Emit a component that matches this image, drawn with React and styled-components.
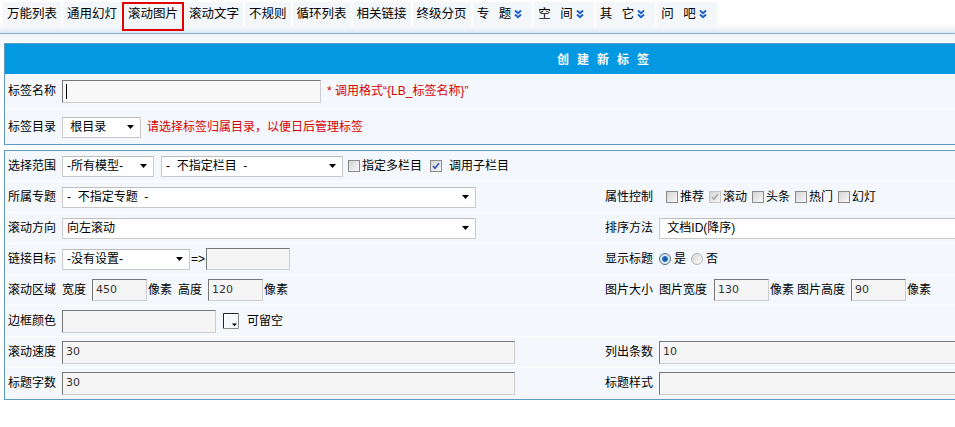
import React from 'react';
import styled, { createGlobalStyle } from 'styled-components';

const GlobalStyle = createGlobalStyle`
  html, body {
    margin: 0;
    padding: 0;
    overflow: hidden;
    background: #fff;
  }
  body {
    font-family: "Liberation Sans", "Noto Sans CJK SC", sans-serif;
    font-size: 12px;
    line-height: 1.2;
    color: #000;
  }
`;

const Page = styled.div`
  width: 955px;
  height: 427px;
  overflow: hidden;
`;

// top tab strip
const TabBar = styled.div`
  display: flex;
  align-items: flex-start;
  gap: 2px;
  height: 34px;
  padding: 2px 0 0 3px;
  box-sizing: border-box;
  background: linear-gradient(to bottom, #fff 0, #fff 24px, #dce8f3 34px);
  border-bottom: 1px solid #8eb0c6;
`;

const Tab = styled.div`
  display: flex;
  align-items: center;
  height: 24px;
  padding: 0 4px;
  box-sizing: border-box;
  background: #f3f7fa;
  font-size: 12.5px;
  white-space: nowrap;

  ${p => p.$active && `
    height: 29px;
    margin: 0 -1px;
    padding: 0 4px 5px;
    border: 2px solid #e20000;
    background: linear-gradient(to bottom, #f3f7fa 0, #f3f7fa 20px, #eaf1f7 25px);
  `}
`;

const Spaced = styled.span`
  letter-spacing: 9.5px;
  margin-right: -6.5px;
`;

const TabEnd = styled.span`
  width: 6px;
`;

const Chevron = () => (
  <svg width="8" height="10" viewBox="0 0 8 10">
    <path d="M1 1.5 L4 4.2 L7 1.5 M1 5.5 L4 8.2 L7 5.5" fill="none" stroke="#1d5fc4" strokeWidth="2" />
  </svg>
);

const Main = styled.div`
  padding: 9px 0 0 4px;
  background: linear-gradient(to bottom, #eef4f9 0, #fff 14px);
`;

const Panel = styled.div`
  width: 1198px;
  box-sizing: border-box;
  border: 1px solid #5e9bbf;
  background: #f4f8fc;

  & + & {
    margin-top: 5px;
  }
`;

const PanelHeader = styled.div`
  display: flex;
  align-items: center;
  justify-content: center;
  height: 30px;
  padding-left: 8px;
  background: #0398e2;
  color: #fff;
  font-family: "Noto Sans CJK SC", sans-serif;
  font-weight: bold;
  letter-spacing: 8px;
`;

const FormRow = styled.div`
  display: flex;
  align-items: center;
  height: ${p => p.$h}px;
  padding-left: 3px;
  box-sizing: border-box;
  border-bottom: ${p => (p.$last ? 'none' : '1px solid #fff')};
`;

const GridRow = styled.div`
  display: grid;
  grid-template-columns: 57px 540px 57px 1fr;
  align-items: center;
  height: 31px;
  box-sizing: border-box;
  border-bottom: ${p => (p.$last ? 'none' : '1px solid #fff')};
`;

const Label = styled.span`
  width: ${p => p.$w || 54}px;
  padding-left: ${p => p.$pl || 0}px;
  flex-shrink: 0;
  white-space: nowrap;
`;

const Cell = styled.div`
  display: flex;
  align-items: center;
  white-space: nowrap;
`;

const Text = styled.span`
  margin-left: ${p => p.$ml || 0}px;
  color: ${p => (p.$red ? '#d40000' : 'inherit')};
`;

const SelectBox = styled.div`
  display: inline-flex;
  align-items: center;
  justify-content: space-between;
  width: ${p => p.$w}px;
  height: 21px;
  padding: 0 6px 0 4px;
  margin-left: ${p => p.$ml || 0}px;
  box-sizing: border-box;
  border: 1px solid #c9c9c9;
  border-top-color: #bdbdbd;
  background: #fff;
  flex-shrink: 0;
  white-space: pre;
`;

const Select = ({ w, ml, children }) => (
  <SelectBox $w={w} $ml={ml}>
    <span>{children}</span>
    <svg width="7" height="4" viewBox="0 0 7 4">
      <path d="M0 0H7L3.5 4Z" fill="#000" />
    </svg>
  </SelectBox>
);

const Input = styled.div`
  display: flex;
  align-items: flex-start;
  width: ${p => p.$w}px;
  height: ${p => p.$h || 23}px;
  padding: 3px 3px 0;
  margin-left: ${p => p.$ml || 0}px;
  box-sizing: border-box;
  border: 1px solid;
  border-color: #777 #cdcdcd #cdcdcd #777;
  background: ${p => (p.$plain ? '#f8f8f8' : '#f5f5f5')};
  font-family: "DejaVu Sans", sans-serif;
  font-size: 11px;
  color: #333;
  flex-shrink: 0;
`;

const Caret = styled.span`
  width: 1px;
  height: 15px;
  background: #000;
`;

const CheckBox = styled.span`
  display: inline-flex;
  align-items: center;
  justify-content: center;
  width: 12px;
  height: 12px;
  margin-left: ${p => p.$ml || 0}px;
  margin-right: 2px;
  box-sizing: border-box;
  border: 1px solid ${p => (p.$disabled ? '#c4c4c4' : '#8a8a8a')};
  background: linear-gradient(135deg, #d4d4d4, #f9f9f9);
  flex-shrink: 0;
`;

const Check = ({ checked, disabled, ml }) => (
  <CheckBox $disabled={disabled} $ml={ml}>
    {checked && (
      <svg width="8" height="8" viewBox="0 0 8 8">
        <path d="M1 4 L3 6.2 L7 1.2" fill="none" stroke={disabled ? '#a9a9a9' : '#3552b8'} strokeWidth="1.6" />
      </svg>
    )}
  </CheckBox>
);

const Radio = styled.span`
  width: 12px;
  height: 12px;
  margin-left: ${p => p.$ml || 0}px;
  margin-right: 3px;
  box-sizing: border-box;
  border-radius: 50%;
  border: 1px solid ${p => (p.$on ? '#55708c' : '#b4b4b4')};
  background: ${p =>
    p.$on
      ? 'radial-gradient(circle, #0c4a90 0, #2a78c6 2.6px, #e4ebf3 3.4px, #c9d4e0 100%)'
      : 'linear-gradient(135deg, #d6d6d6, #fbfbfb)'};
  flex-shrink: 0;
`;

const ColorIcon = () => (
  <svg width="17" height="16" viewBox="0 0 17 16" style={{ marginLeft: 7, marginRight: 7 }}>
    <path d="M0.5 15.5 V0.5 H15.5" fill="none" stroke="#222" />
    <path d="M15.5 0.5 V15.5 H0.5" fill="none" stroke="#8a8a8a" />
    <path d="M1.5 14.5 V1.5 H14.5" fill="none" stroke="#fff" />
    <path d="M9 10.5 H14 L11.5 13.2 Z" fill="#000" />
  </svg>
);

const tabs = ['万能列表', '通用幻灯', '滚动图片', '滚动文字', '不规则', '循环列表', '相关链接', '终级分页'];
const menus = ['专题', '空间', '其它', '问吧'];

export default function App() {
  return (
    <Page>
      <GlobalStyle />
      <TabBar>
        {tabs.map(t => (
          <Tab key={t} $active={t === '滚动图片'}>{t}</Tab>
        ))}
        {menus.map(m => (
          <Tab key={m}>
            <Spaced>{m}</Spaced>
            <Chevron />
            <TabEnd />
          </Tab>
        ))}
      </TabBar>

      <Main>
        <Panel>
          <PanelHeader>创建新标签</PanelHeader>
          <FormRow $h={36}>
            <Label>标签名称</Label>
            <Input $w={259} $plain>
              <Caret />
            </Input>
            <Text $red $ml={6}>* 调用格式“{'{'}LB_标签名称{'}'}”</Text>
          </FormRow>
          <FormRow $h={34} $last>
            <Label>标签目录</Label>
            <Select w={79}>{' 根目录'}</Select>
            <Text $red $ml={6}>请选择标签归属目录，以便日后管理标签</Text>
          </FormRow>
        </Panel>

        <Panel>
          <GridRow>
            <Label $pl={3} $w={57}>选择范围</Label>
            <Cell>
              <Select w={92}>-所有模型-</Select>
              <Select w={182} ml={7}>-  不指定栏目  -</Select>
              <Check ml={5} />
              <Text>指定多栏目</Text>
              <Check ml={8} checked />
              <Text $ml={5}>调用子栏目</Text>
            </Cell>
            <span />
            <span />
          </GridRow>

          <GridRow>
            <Label $pl={3} $w={57}>所属专题</Label>
            <Cell>
              <Select w={414}>-  不指定专题  -</Select>
            </Cell>
            <Label $pl={3} $w={57}>属性控制</Label>
            <Cell>
              <Check ml={7} />
              <Text>推荐</Text>
              <Check ml={5} checked disabled />
              <Text>滚动</Text>
              <Check ml={5} />
              <Text>头条</Text>
              <Check ml={5} />
              <Text>热门</Text>
              <Check ml={5} />
              <Text>幻灯</Text>
            </Cell>
          </GridRow>

          <GridRow>
            <Label $pl={3} $w={57}>滚动方向</Label>
            <Cell>
              <Select w={414}>向左滚动</Select>
            </Cell>
            <Label $pl={3} $w={57}>排序方法</Label>
            <Cell>
              <Select w={520}>{' 文档ID(降序)'}</Select>
            </Cell>
          </GridRow>

          <GridRow>
            <Label $pl={3} $w={57}>链接目标</Label>
            <Cell>
              <Select w={128}>-没有设置-</Select>
              <Text $ml={1}>=&gt;</Text>
              <Input $w={84} $h={22} $ml={1} />
            </Cell>
            <Label $pl={3} $w={57}>显示标题</Label>
            <Cell>
              <Radio $on />
              <Text>是</Text>
              <Radio $ml={5} />
              <Text>否</Text>
            </Cell>
          </GridRow>

          <GridRow>
            <Label $pl={3} $w={57}>滚动区域</Label>
            <Cell>
              <Text>宽度</Text>
              <Input $w={55} $h={22} $ml={6}>450</Input>
              <Text $ml={1}>像素</Text>
              <Text $ml={6}>高度</Text>
              <Input $w={55} $h={22} $ml={6}>120</Input>
              <Text $ml={1}>像素</Text>
            </Cell>
            <Label $pl={3} $w={57}>图片大小</Label>
            <Cell>
              <Text>图片宽度</Text>
              <Input $w={55} $h={22} $ml={7}>130</Input>
              <Text $ml={1}>像素</Text>
              <Text $ml={3}>图片高度</Text>
              <Input $w={55} $h={22} $ml={6}>90</Input>
              <Text $ml={1}>像素</Text>
            </Cell>
          </GridRow>

          <GridRow>
            <Label $pl={3} $w={57}>边框颜色</Label>
            <Cell>
              <Input $w={154} $h={23} />
              <ColorIcon />
              <Text>可留空</Text>
            </Cell>
            <span />
            <span />
          </GridRow>

          <GridRow>
            <Label $pl={3} $w={57}>滚动速度</Label>
            <Cell>
              <Input $w={453}>30</Input>
            </Cell>
            <Label $pl={3} $w={57}>列出条数</Label>
            <Cell>
              <Input $w={520}>10</Input>
            </Cell>
          </GridRow>

          <GridRow $last>
            <Label $pl={3} $w={57}>标题字数</Label>
            <Cell>
              <Input $w={453}>30</Input>
            </Cell>
            <Label $pl={3} $w={57}>标题样式</Label>
            <Cell>
              <Input $w={520} />
            </Cell>
          </GridRow>
        </Panel>
      </Main>
    </Page>
  );
}
